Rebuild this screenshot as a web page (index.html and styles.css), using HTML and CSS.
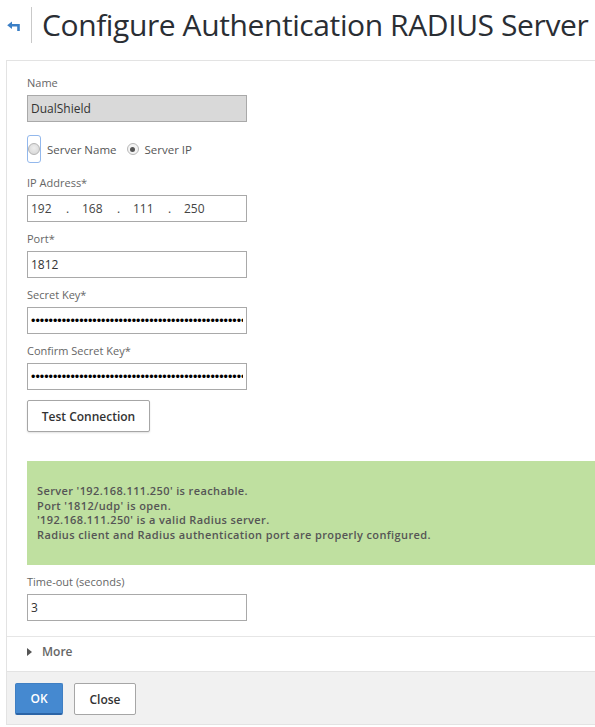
FILE: index.html
```html
<!DOCTYPE html>
<html>
<head>
<meta charset="utf-8">
<link rel="stylesheet" href="styles.css">
</head>
<body>
<div class="header">
  <span class="back"><svg width="14" height="10" viewBox="0 0 14 10"><path d="M0.2 4.2 L5 0.4 L5 8 Z" fill="#3b7fc6"/><path d="M4 4.2 H11.5 V10" fill="none" stroke="#3b7fc6" stroke-width="2.6"/></svg></span>
  <span class="sep"></span>
  <h1 class="title">Configure Authentication RADIUS Server</h1>
</div>
<div class="panel">
  <div class="form">
    <div class="field">
      <label class="lbl">Name</label>
      <input class="inp inp-disabled" value="DualShield" disabled>
    </div>
    <div class="radios">
      <span class="ring"><span class="radio"></span></span>
      <span class="rlabel">Server Name</span>
      <span class="radio radio-on"><span class="dot"></span></span>
      <span class="rlabel">Server IP</span>
    </div>
    <div class="field">
      <label class="lbl">IP Address*</label>
      <div class="inp ip">
        <span class="oct">192</span><span class="ipdot">.</span><span class="oct">168</span><span class="ipdot">.</span><span class="oct">111</span><span class="ipdot">.</span><span class="oct">250</span>
      </div>
    </div>
    <div class="field">
      <label class="lbl">Port*</label>
      <input class="inp" value="1812">
    </div>
    <div class="field">
      <label class="lbl">Secret Key*</label>
      <input class="inp pw" type="password" value="aaaaaaaaaaaaaaaaaaaaaaaaaaaaaaaaaaaaaaaaaaaaaaaaaaaaaaaaaaaaaaaaaaaa">
    </div>
    <div class="field">
      <label class="lbl">Confirm Secret Key*</label>
      <input class="inp pw" type="password" value="aaaaaaaaaaaaaaaaaaaaaaaaaaaaaaaaaaaaaaaaaaaaaaaaaaaaaaaaaaaaaaaaaaaa">
    </div>
    <button class="btn btn-test">Test Connection</button>
    <div class="notice">
      <div class="nline">Server '192.168.111.250' is reachable.</div>
      <div class="nline">Port '1812/udp' is open.</div>
      <div class="nline">'192.168.111.250' is a valid Radius server.</div>
      <div class="nline">Radius client and Radius authentication port are properly configured.</div>
    </div>
    <div class="field">
      <label class="lbl">Time-out (seconds)</label>
      <input class="inp" value="3">
    </div>
  </div>
  <div class="more"><span class="tri"></span><span class="more-text">More</span></div>
  <div class="footer">
    <button class="btn btn-ok">OK</button>
    <button class="btn btn-close">Close</button>
  </div>
</div>
</body>
</html>
```
FILE: styles.css
```css
* { box-sizing: border-box; }
html, body { margin: 0; padding: 0; background: #fff; overflow: hidden; }
body { font-family: "Open Sans", "Noto Sans", sans-serif; color: #333; width: 595px; height: 727px; }

.header { height: 60px; display: flex; align-items: flex-start; padding-top: 7px; }
.back { display: block; margin: 14px 0 0 7px; width: 14px; height: 10px; }
.back svg { display: block; }
.sep { display: block; width: 1px; height: 36px; background: #c9c9c9; margin-left: 10px; }
.title { margin: 0 0 0 10px; font-size: 30px; line-height: 36px; font-weight: 400; color: #2a2e34; letter-spacing: -0.4px; white-space: nowrap; }

.panel { margin-left: 6px; border-left: 1px solid #e3e3e3; border-top: 1px solid #e3e3e3; }
.form { padding: 14px 0 6px 20px; }

.field { display: flex; flex-direction: column; align-items: flex-start; margin-bottom: 9px; }
.lbl { display: block; font-size: 11px; line-height: 16px; height: 20px; color: #666; padding-bottom: 4px; }
.inp { display: block; width: 220px; height: 27px; border: 1px solid #a9a9a9; border-radius: 0; padding: 0 3px; margin: 0; font-family: "Open Sans", sans-serif; font-size: 12px; color: #333; background: #fff; outline: none; }
.inp-disabled { background: #d9d9d9; color: #333; }
.ip { display: flex; align-items: center; color: #444; }
.oct { width: 35px; }
.ipdot { width: 16px; }
.pw { font-family: "Liberation Sans", sans-serif; font-size: 12.5px; color: #000; padding-left: 3px; }

.radios { display: flex; align-items: center; margin: 13px 0 12px; height: 28px; }
.ring { display: flex; align-items: center; justify-content: center; width: 14px; height: 28px; border: 1px solid #93b8ec; border-radius: 3px; }
.radio { display: flex; align-items: center; justify-content: center; width: 12px; height: 12px; border-radius: 50%; border: 1px solid #b4b4b4; background: radial-gradient(circle at 50% 40%, #eeeeee, #d3d3d3); }
.radio-on { background: #f4f4f4; border-color: #b8b8b8; margin-left: 10px; }
.dot { width: 5px; height: 5px; border-radius: 50%; background: #555; }
.rlabel { font-size: 11.5px; color: #555; margin-left: 6px; }

.btn { font-family: "Open Sans", sans-serif; font-weight: 600; font-size: 12px; height: 32px; border-radius: 2px; cursor: pointer; padding: 0; }
.btn-test { display: block; margin-top: 10px; width: 123px; background: #fff; border: 1px solid #a6a6a6; color: #333; box-shadow: 0 1px 2px rgba(0,0,0,0.12); }

.notice { margin-top: 29px; margin-bottom: 9px; height: 104px; background: #bfe0a0; padding: 22px 10px 0; font-size: 11px; font-weight: 600; letter-spacing: 0.38px; line-height: 15px; color: #555; }
.nline { height: 14.6px; }

.more { display: flex; align-items: center; height: 35px; padding: 0 0 5px 20px; border-top: 1px solid #e6e6e6; }
.tri { width: 0; height: 0; border-left: 5px solid #555; border-top: 4.5px solid transparent; border-bottom: 4.5px solid transparent; }
.more-text { margin-left: 10px; font-size: 12px; font-weight: 600; color: #666; }

.footer { display: flex; gap: 11px; height: 54px; padding: 11px 8px 0; background: #f1f1f1; border-top: 1px solid #e3e3e3; border-bottom: 1px solid #e3e3e3; }
.btn-ok { width: 48px; background: #4589d0; border: 1px solid #3f7fc3; border-bottom: 2px solid #2b64a6; color: #fff; }
.btn-close { width: 62px; background: #fff; border: 1px solid #a6a6a6; color: #333; }
```
